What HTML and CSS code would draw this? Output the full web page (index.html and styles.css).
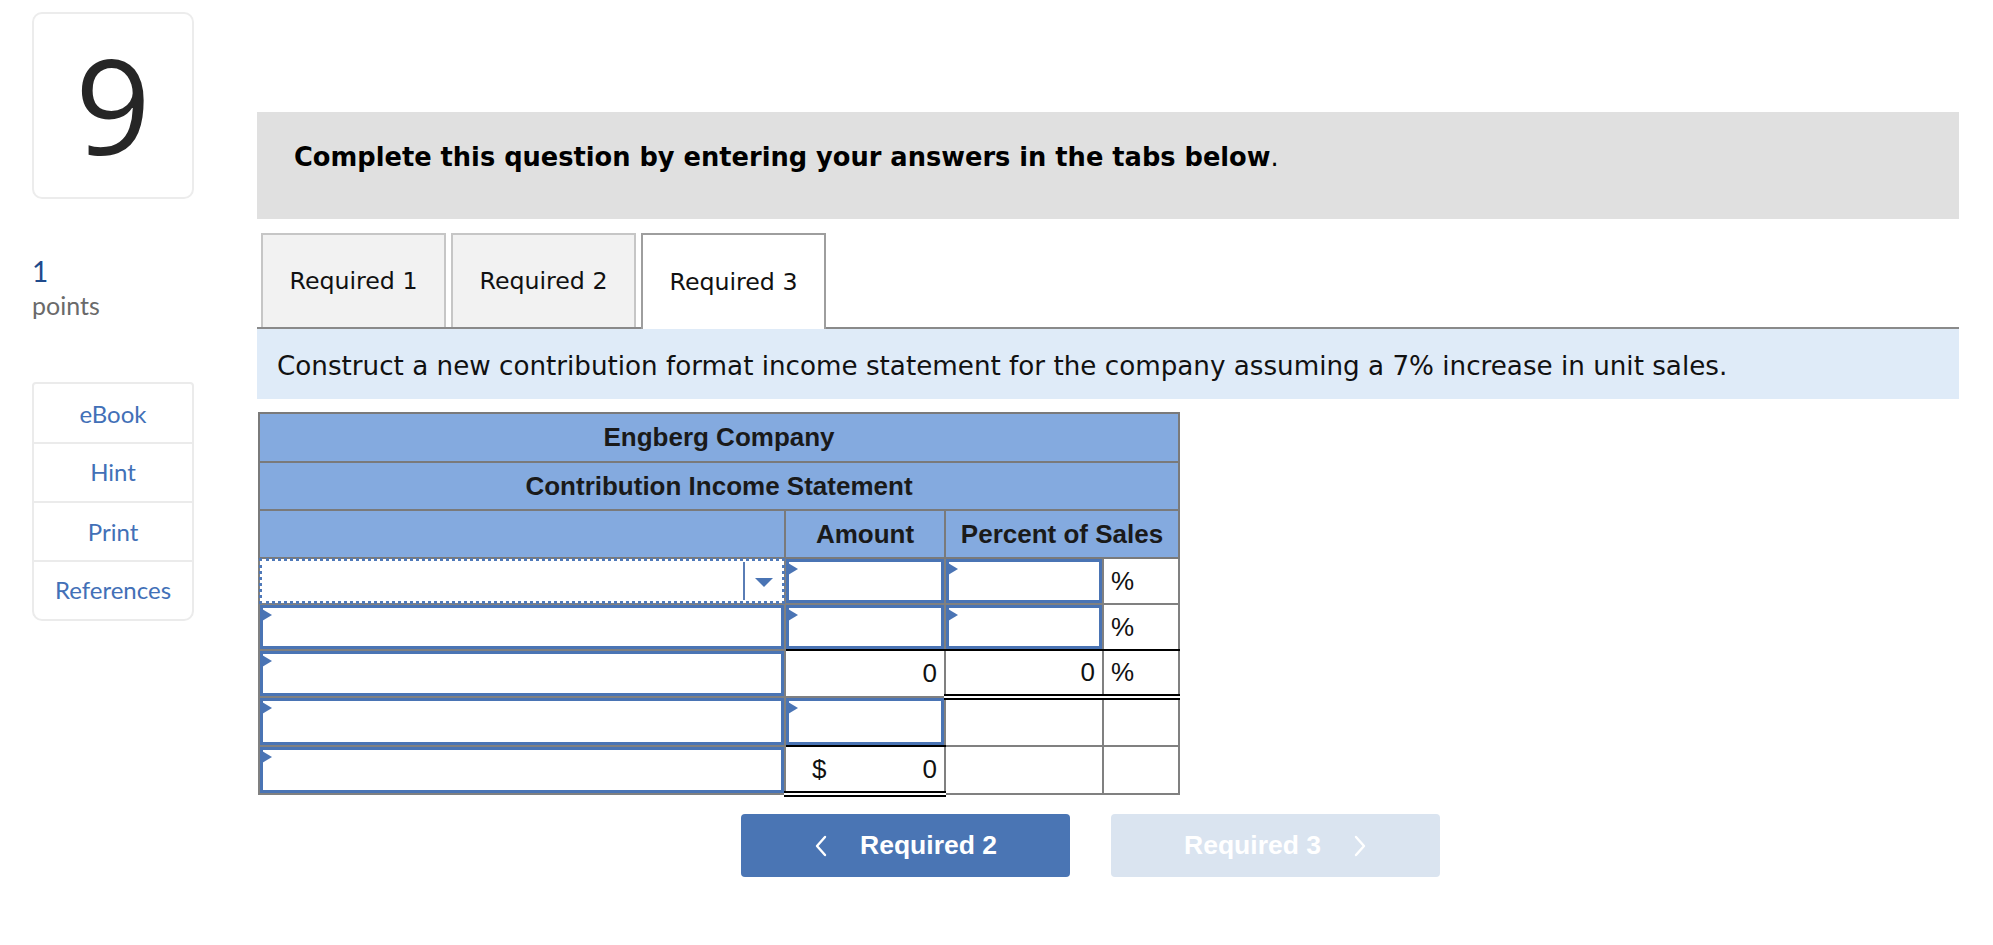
FILE: index.html
```html
<!DOCTYPE html>
<html lang="en">
<head>
<meta charset="utf-8">
<title>Question 9</title>
<link rel="stylesheet" href="styles.css">
</head>
<body>
<div class="page">
  <aside class="side">
    <div class="qnum">9</div>
    <div class="pts">
      <div class="pts-num">1</div>
      <div class="pts-label">points</div>
    </div>
    <ul class="tools">
      <li>eBook</li>
      <li>Hint</li>
      <li>Print</li>
      <li>References</li>
    </ul>
  </aside>
  <main class="main">
    <div class="banner">Complete this question by entering your answers in the tabs below<span class="dot">.</span></div>
    <div class="tabs">
      <div class="tab">Required 1</div>
      <div class="tab">Required 2</div>
      <div class="tab active">Required 3</div>
    </div>
    <div class="instr">Construct a new contribution format income statement for the company assuming a 7% increase in unit sales.</div>
    <table class="stmt">
      <colgroup>
        <col class="c1"><col class="c2"><col class="c3"><col class="c4">
      </colgroup>
      <tr class="h1"><th colspan="4">Engberg Company</th></tr>
      <tr class="h2"><th colspan="4">Contribution Income Statement</th></tr>
      <tr class="h3"><th></th><th>Amount</th><th colspan="2">Percent of Sales</th></tr>
      <tr class="r1">
        <td class="sel"></td>
        <td class="inp"></td>
        <td class="inp"></td>
        <td class="pct">%</td>
      </tr>
      <tr class="r2">
        <td class="inp"></td>
        <td class="inp blk-b"></td>
        <td class="inp blk-b"></td>
        <td class="pct blk-b">%</td>
      </tr>
      <tr class="r3">
        <td class="inp"></td>
        <td class="num">0</td>
        <td class="num dbl-b">0</td>
        <td class="pct dbl-b">%</td>
      </tr>
      <tr class="r4">
        <td class="inp"></td>
        <td class="inp blk-b"></td>
        <td></td>
        <td></td>
      </tr>
      <tr class="r5">
        <td class="inp"></td>
        <td class="dbl-b"><div class="money"><span>$</span><span>0</span></div></td>
        <td></td>
        <td></td>
      </tr>
    </table>
    <div class="navbtns">
      <button class="nav prev" type="button">
        <svg class="chev" width="14" height="22" viewBox="0 0 14 22"><polyline points="11,2 3,11 11,20" fill="none" stroke="#fff" stroke-width="2.4" stroke-linecap="round" stroke-linejoin="round"/></svg>
        <span>Required 2</span>
      </button>
      <button class="nav next" type="button" disabled>
        <span>Required 3</span>
        <svg class="chev" width="14" height="22" viewBox="0 0 14 22"><polyline points="3,2 11,11 3,20" fill="none" stroke="#fff" stroke-width="2.4" stroke-linecap="round" stroke-linejoin="round"/></svg>
      </button>
    </div>
  </main>
</div>
</body>
</html>
```
FILE: styles.css
```css
html, body {
  margin: 0;
  padding: 0;
  background: #fff;
}

.page {
  display: flex;
  align-items: flex-start;
  padding: 12px 0 0 32px;
}

/* ---------- left column ---------- */
.side {
  width: 162px;
  flex: none;
}

.qnum {
  height: 187px;
  box-sizing: border-box;
  border: 2px solid #ececec;
  border-radius: 10px;
  display: flex;
  align-items: center;
  justify-content: center;
  font-family: "Open Sans", "DejaVu Sans", sans-serif;
  font-weight: 500;
  font-size: 132px;
  line-height: 1;
  color: #262626;
  padding-bottom: 4px;
}

.pts {
  margin-top: 55px;
  font-family: Lato, "Open Sans", sans-serif;
}

.pts-num {
  font-size: 28px;
  line-height: 34px;
  color: #1f4a8c;
}

.pts-label {
  font-size: 25px;
  line-height: 32px;
  margin-top: 1px;
  color: #6a6a6a;
}

.tools {
  list-style: none;
  margin: 61px 0 0 0;
  padding: 0;
  border: 2px solid #ebebeb;
  border-radius: 4px 4px 10px 10px;
  font-family: Lato, "Open Sans", sans-serif;
  font-size: 24px;
  color: #4270b7;
}

.tools li {
  height: 57px;
  display: flex;
  align-items: center;
  justify-content: center;
}

.tools li:first-child {
  height: 58px;
}

.tools li:nth-child(2) {
  padding-bottom: 2px;
  height: 55px;
}

.tools li:last-child {
  padding-bottom: 3px;
  height: 54px;
}

.tools li + li {
  border-top: 2px solid #ebebeb;
}

/* ---------- main column ---------- */
.main {
  margin-left: 63px;
  width: 1702px;
  flex: none;
}

.banner {
  height: 107px;
  box-sizing: border-box;
  margin-top: 100px;
  padding: 30px 0 0 37px;
  background: #e0e0e0;
  font-family: "DejaVu Sans", Verdana, sans-serif;
  font-weight: bold;
  font-size: 25.7px;
  line-height: 30px;
  color: #000;
}

.banner .dot {
  font-weight: normal;
}

.tabs {
  margin-top: 14px;
  height: 94px;
  display: flex;
  align-items: stretch;
  gap: 5px;
  padding-left: 4px;
  border-bottom: 2px solid #8a8a8a;
}

.tab {
  width: 185px;
  box-sizing: border-box;
  border: 2px solid #c6c6c6;
  border-bottom: none;
  background: #f2f2f2;
  display: flex;
  align-items: center;
  justify-content: center;
  font-family: "DejaVu Sans", Verdana, sans-serif;
  font-size: 23.7px;
  color: #111;
}

.tab.active {
  background: #fff;
  border-color: #9e9e9e;
  margin-bottom: -2px;
  position: relative;
}

.instr {
  height: 70px;
  box-sizing: border-box;
  padding: 4px 0 0 20px;
  background: #dfebf8;
  display: flex;
  align-items: center;
  font-family: "DejaVu Sans", Verdana, sans-serif;
  font-size: 26.2px;
  color: #111;
}

/* ---------- statement table ---------- */
.stmt {
  margin: 13px 0 0 1px;
  width: 920px;
  table-layout: fixed;
  border-collapse: collapse;
  border: 2px solid #7a7a7a;
  font-family: "Liberation Sans", Arial, sans-serif;
  font-size: 26px;
  color: #111;
}

.stmt col.c1 { width: 526px; }
.stmt col.c2 { width: 160px; }
.stmt col.c3 { width: 158px; }
.stmt col.c4 { width: 76px; }

.stmt th {
  background: #84aadf;
  border: 2px solid #7a7a7a;
  font-weight: bold;
  color: #1a1a1a;
  text-align: center;
  padding: 0;
}

.stmt tr.h1 { height: 49px; }
.stmt tr.h2 { height: 48px; }
.stmt tr.h3 { height: 48px; }
.stmt tr.r1, .stmt tr.r2 { height: 46px; }
.stmt tr.r3 { height: 47px; }
.stmt tr.r4 { height: 49px; }
.stmt tr.r5 { height: 48px; }

.stmt td {
  border: 2px solid #808080;
  padding: 0;
  position: relative;
  background: #fff;
}

.stmt td.inp {
  box-shadow: inset 0 0 0 3px #4a74b4;
}

.stmt td.inp::before {
  content: "";
  position: absolute;
  left: 2px;
  top: 4px;
  border-left: 10px solid #4a74b4;
  border-top: 6px solid transparent;
  border-bottom: 6px solid transparent;
}

.stmt td.sel {
  outline: 3px dotted #4f79b9;
  outline-offset: -3px;
}

.stmt td.sel::before {
  content: "";
  position: absolute;
  right: 39px;
  top: 3px;
  bottom: 3px;
  width: 2px;
  background: #5a7db5;
}

.stmt td.sel::after {
  content: "";
  position: absolute;
  right: 11px;
  top: 50%;
  margin-top: -3px;
  border-top: 9px solid #4a74b4;
  border-left: 9px solid transparent;
  border-right: 9px solid transparent;
}

.stmt td.num {
  text-align: right;
  padding-right: 7px;
}

.stmt td.pct {
  text-align: left;
  padding-left: 7px;
}

.stmt td.blk-b {
  border-bottom: 2px solid #000;
}

.stmt td.dbl-b {
  border-bottom: 6px double #000;
}

.stmt tr.r5 td:nth-child(2) {
  border-top: 2px solid #000;
}

.money {
  display: flex;
  justify-content: space-between;
  padding: 0 7px 0 26px;
}

/* ---------- nav buttons ---------- */
.navbtns {
  margin-top: 17px;
  display: flex;
  gap: 41px;
  padding-left: 484px;
}

.nav {
  width: 329px;
  height: 63px;
  border: none;
  border-radius: 4px;
  display: flex;
  align-items: center;
  justify-content: center;
  gap: 32px;
  padding: 0;
  font-family: "Liberation Sans", Arial, sans-serif;
  font-weight: bold;
  font-size: 26.5px;
  color: #fff;
  cursor: pointer;
}

.nav.prev {
  background: #4a75b4;
}

.nav.next {
  background: #dae4f0;
  cursor: default;
}

.chev {
  display: block;
  flex: none;
}
```
